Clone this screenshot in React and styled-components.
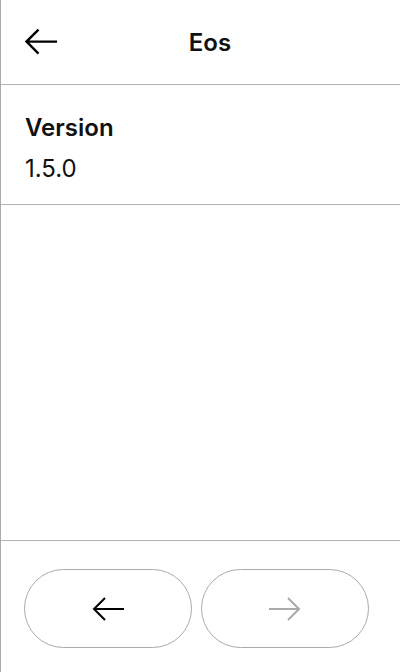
import React from "react";
import styled, { createGlobalStyle } from "styled-components";

const GlobalStyle = createGlobalStyle`
  html, body {
    margin: 0;
    padding: 0;
    background: #fff;
  }
  body {
    font-family: Inter, "Noto Sans", sans-serif;
    color: #111;
  }
`;

const Screen = styled.div`
  width: 400px;
  height: 672px;
  box-sizing: border-box;
  border-left: 1px solid #aaa;
  display: flex;
  flex-direction: column;
  background: #fff;
`;

const Header = styled.header`
  height: 84px;
  flex-shrink: 0;
  border-bottom: 1px solid #b4b4b4;
  display: grid;
  grid-template-columns: 80px 1fr 61px;
  align-items: center;
`;

const IconButton = styled.button`
  background: none;
  border: none;
  padding: 0 0 0 23px;
  height: 100%;
  display: flex;
  align-items: center;
  cursor: pointer;
`;

const Title = styled.h1`
  margin: 0;
  text-align: center;
  font-size: 24px;
  font-weight: 600;
  color: #111;
`;

const Content = styled.main`
  flex: 1;
  display: flex;
  flex-direction: column;
`;

const InfoRow = styled.section`
  height: 120px;
  box-sizing: border-box;
  border-bottom: 1px solid #b4b4b4;
  padding: 27px 24px 0;
  display: flex;
  flex-direction: column;
  gap: 9px;
`;

const Label = styled.div`
  font-size: 24px;
  font-weight: 600;
  line-height: 32px;
`;

const Value = styled.div`
  font-size: 24px;
  font-weight: 400;
  line-height: 32px;
`;

const Footer = styled.footer`
  height: 132px;
  flex-shrink: 0;
  box-sizing: border-box;
  border-top: 1px solid #b4b4b4;
  padding: 28px 0 0 23px;
  display: flex;
  gap: 9px;
`;

const NavButton = styled.button`
  width: 168px;
  height: 79px;
  box-sizing: border-box;
  border: 1px solid #aaa;
  border-radius: 40px;
  background: #fff;
  display: flex;
  align-items: center;
  justify-content: center;
  cursor: pointer;
  color: ${(p) => (p.disabled ? "#aaa" : "#000")};
`;

const Arrow = ({ size = 34, dir = "left", color = "currentColor" }) => (
  <svg
    width={size}
    height={size * 0.8}
    viewBox="0 0 34 27"
    fill="none"
    stroke={color}
    strokeWidth="2.4"
    style={dir === "right" ? { transform: "scaleX(-1)" } : undefined}
  >
    <path d="M33 13.5H2.5M14.5 1.5L2.5 13.5L14.5 25.5" />
  </svg>
);

const SmallArrow = ({ dir = "left" }) => (
  <svg
    width="34"
    height="26"
    viewBox="0 0 34 26"
    fill="none"
    stroke="currentColor"
    strokeWidth="2"
    style={dir === "right" ? { transform: "scaleX(-1)" } : undefined}
  >
    <path d="M33 13H3M14 2L3 13L14 24" />
  </svg>
);

export default function App() {
  return (
    <>
      <GlobalStyle />
      <Screen>
        <Header>
          <IconButton aria-label="Back">
            <Arrow />
          </IconButton>
          <Title>Eos</Title>
          <span />
        </Header>
        <Content>
          <InfoRow>
            <Label>Version</Label>
            <Value>1.5.0</Value>
          </InfoRow>
        </Content>
        <Footer>
          <NavButton aria-label="Previous">
            <SmallArrow />
          </NavButton>
          <NavButton aria-label="Next" disabled>
            <SmallArrow dir="right" />
          </NavButton>
        </Footer>
      </Screen>
    </>
  );
}
